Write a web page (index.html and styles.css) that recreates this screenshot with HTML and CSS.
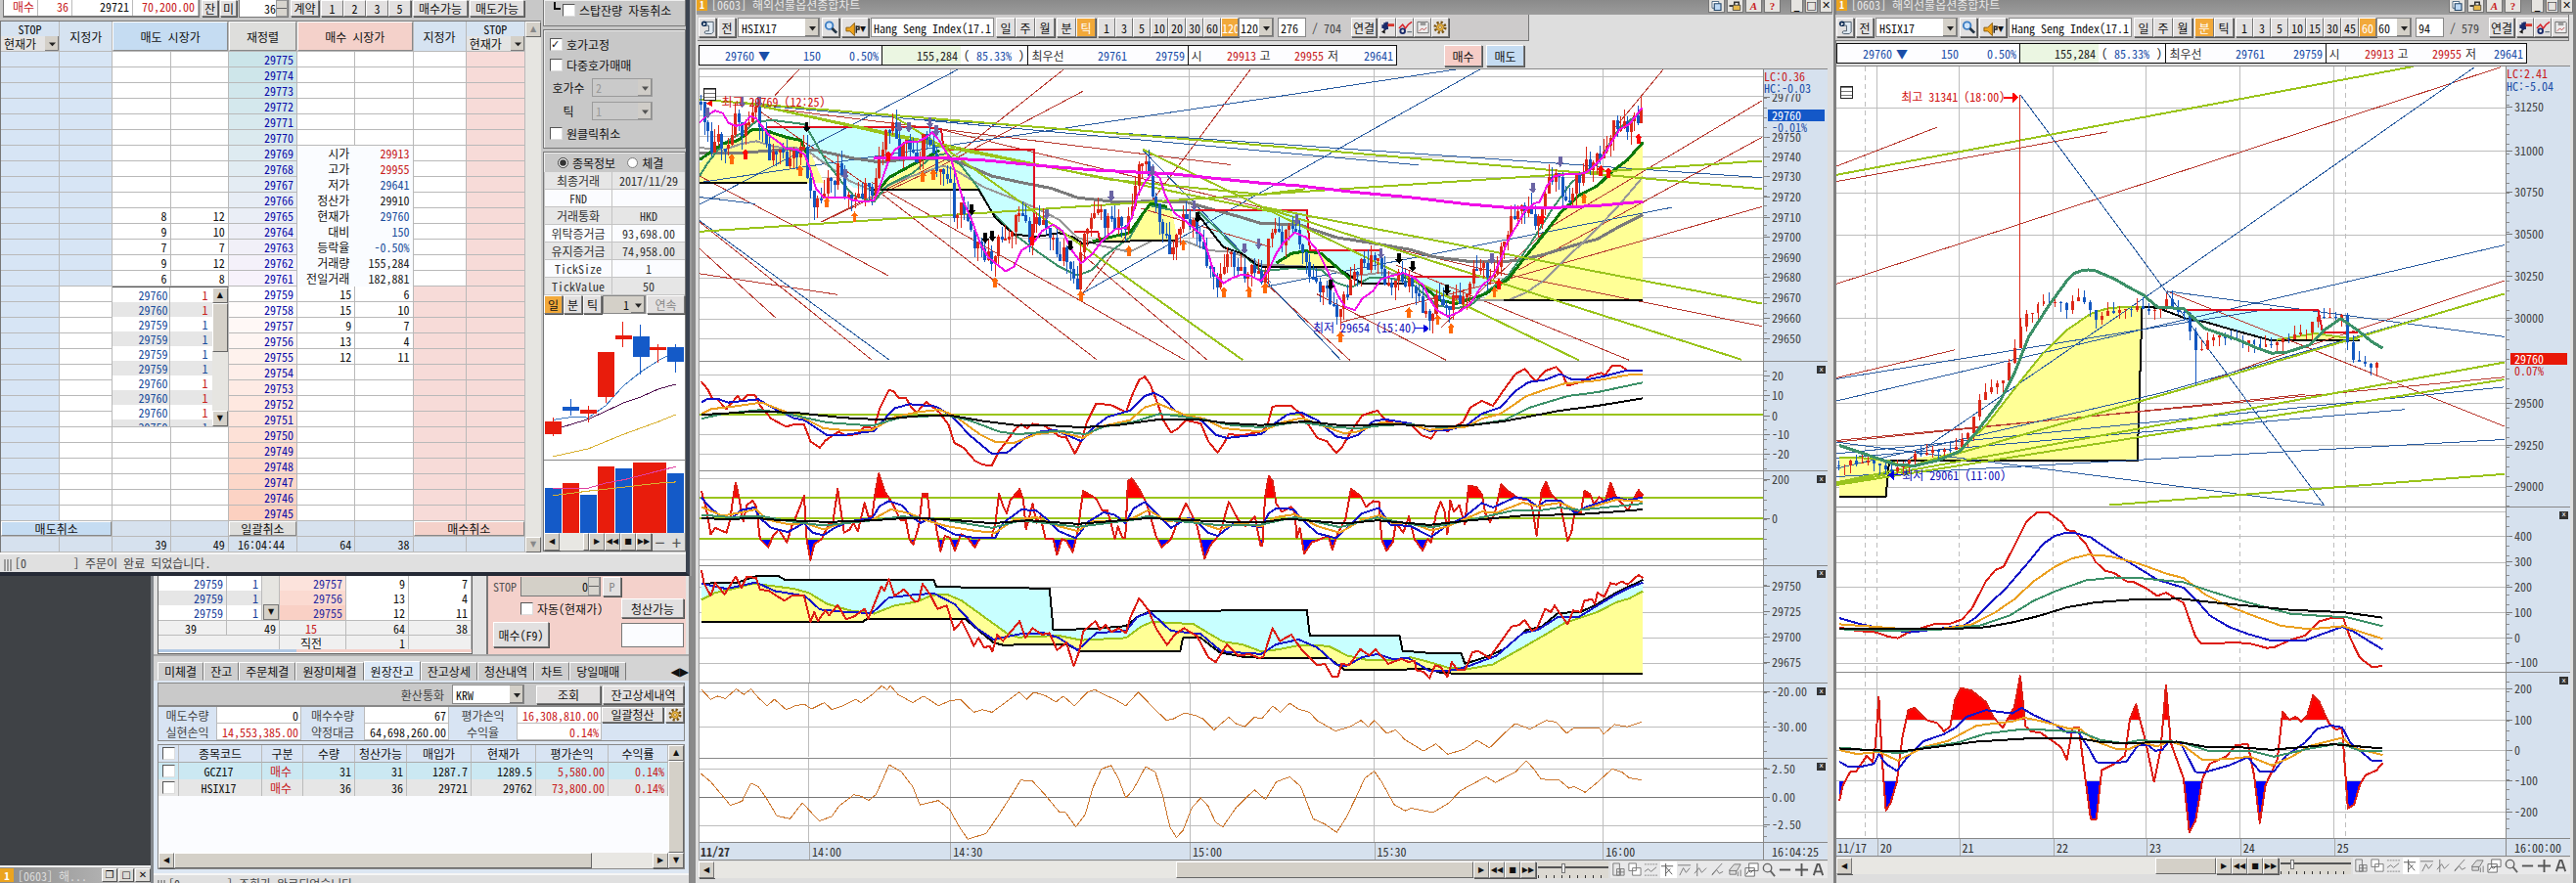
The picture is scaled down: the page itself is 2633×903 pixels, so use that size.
FILE: index.html
```html
<!DOCTYPE html>
<html lang="ko">

<head>
    <meta charset="UTF-8">
    <meta name="viewport" content="width=device-width, initial-scale=1.0">
    <title>해외선물옵션종합차트</title>
    <link rel="stylesheet" href="styles.css">
</head>

<body>
    <!-- Shared icons -->
    <svg class="sprite" aria-hidden="true">
        <symbol id="i-doc" viewBox="0 0 16 16"><path d="M5 2h9v11l-2 2H6c-2 0-2-3 0-3h3V6H5z" fill="#dfe9f2" stroke="#456"/><circle cx="4" cy="4" r="3" fill="#0d2c55"/><path d="M3 3l3 1-3 2z" fill="#fff"/></symbol>
        <symbol id="i-find" viewBox="0 0 16 16"><circle cx="6" cy="6" r="4" fill="#cfe4fa" stroke="#3f7fc4" stroke-width="2"/><path d="M9 9l5 5" stroke="#234" stroke-width="3"/></symbol>
        <symbol id="i-speaker" viewBox="0 0 16 16"><path d="M1 6h4l5-5v14l-5-5H1z" fill="#f0a41c" stroke="#8a5a08"/><path d="M12 4v8M12 5h3v3h-3" fill="none" stroke="#222" stroke-width="1.5"/></symbol>
        <symbol id="i-link" viewBox="0 0 16 16"><path d="M5 3v8M3 5v4M7 2v8" stroke="#1a2a6a" stroke-width="3"/><path d="M8 4h7v3H8z" fill="#d8342a"/><path d="M1 13l4-3v5z" fill="#111"/></symbol>
        <symbol id="i-trend" viewBox="0 0 16 16"><path d="M1 9l4-4 3 4 3-4 4-3" fill="none" stroke="#d8222a" stroke-width="1.6"/><circle cx="5" cy="12" r="2.5" fill="none" stroke="#1a2a6a" stroke-width="2"/><path d="M10 13h5" stroke="#456"/></symbol>
        <symbol id="i-save" viewBox="0 0 16 16"><path d="M2 2h11l1 1v11H2z" fill="#eee" stroke="#666"/><path d="M5 2h6v4H5z" fill="#999"/><path d="M4 12l3-3 2 2 3-3" fill="none" stroke="#b44"/></symbol>
        <symbol id="i-gear" viewBox="0 0 16 16"><circle cx="8" cy="8" r="6" fill="none" stroke="#7a5410" stroke-width="3" stroke-dasharray="2.5 2.2"/><circle cx="8" cy="8" r="4" fill="#f3c14a" stroke="#a06c10"/><circle cx="8" cy="8" r="1.6" fill="#fff" stroke="#a06c10"/></symbol>
        <symbol id="i-copy" viewBox="0 0 16 16"><path d="M2 2h9v9H2z" fill="#fff" stroke="#246"/><path d="M5 5h9v9H5z" fill="#bcd8f4" stroke="#246" stroke-width="1.5"/></symbol>
        <symbol id="i-lock" viewBox="0 0 16 16"><path d="M5 7h10v7H5z" fill="#e6b84a" stroke="#333"/><path d="M7 7V3h6v4" fill="none" stroke="#333" stroke-width="2"/><path d="M0 8h5" stroke="#111" stroke-width="2"/></symbol>
        <symbol id="t-1" viewBox="0 0 16 16"><path d="M3 1h7v13H3zM7 7h8v7H7zM7 10.5h8M11 7v7" fill="none" stroke="#777"/></symbol>
        <symbol id="t-2" viewBox="0 0 16 16"><path d="M2 1h8v8H2zM6 6h9v8H6z" fill="#fff" stroke="#777"/></symbol>
        <symbol id="t-3" viewBox="0 0 16 16"><path d="M1 2h14M1 14h14" stroke="#888" stroke-dasharray="2 1"/><path d="M1 10l4-3 3 3 6-5" fill="none" stroke="#777"/></symbol>
        <symbol id="t-4" viewBox="0 0 16 16"><path d="M6 1v14M1 4h13M6 5l7 8M6 12l5-5" fill="none" stroke="#555"/></symbol>
        <symbol id="t-5" viewBox="0 0 16 16"><path d="M1 3h14M3 14l4-8 3 5 4-5" fill="none" stroke="#777"/></symbol>
        <symbol id="t-6" viewBox="0 0 16 16"><path d="M4 1v14M1 12l5-6 3 5 5-5" fill="none" stroke="#777"/></symbol>
        <symbol id="t-7" viewBox="0 0 16 16"><path d="M2 13L13 1M2 14l5-6 3 4 4-2" fill="none" stroke="#777"/></symbol>
        <symbol id="t-8" viewBox="0 0 16 16"><path d="M2 8l5-6h7l-4 7H2zM2 8v5h7V9M11 10v5M14 8v7" fill="#ddd" stroke="#777"/></symbol>
        <symbol id="t-9" viewBox="0 0 16 16"><path d="M5 1h10v8H5zM1 6h10v9H1z" fill="#fff" stroke="#666"/><path d="M2 13l3-4 2 2 3-3" fill="none" stroke="#444"/></symbol>
        <symbol id="t-10" viewBox="0 0 16 16"><circle cx="7" cy="6" r="4.5" fill="none" stroke="#666" stroke-width="1.5"/><path d="M10 9l5 6" stroke="#666" stroke-width="2"/></symbol>
        <symbol id="t-11" viewBox="0 0 16 16"><path d="M2 8h12" stroke="#555" stroke-width="2"/></symbol>
        <symbol id="t-12" viewBox="0 0 16 16"><path d="M1 8h14M8 1v14" stroke="#555" stroke-width="2"/></symbol>
        <symbol id="t-13" viewBox="0 0 16 16"><path d="M3 14L7 2h2l4 12M5 10h6" fill="none" stroke="#555" stroke-width="2"/></symbol>
    </svg>

    <div class="desktop">
        <div class="left">
            <!-- Order window -->
            <section class="order">
                <div class="order-body">
                    <div class="ladder-side">
                        <div class="top-strip">
                            <div class="position">
                                <span class="red w35">매수</span><span class="red w35">36</span><span class="w62">29721</span><span class="red w67">70,200.00</span>
                            </div>
                            <button class="btn w17">잔</button><button class="btn w17">미</button>
                            <label class="spin"><input type="text" value="36" aria-label="주문수량"><i></i></label>
                            <button class="btn w30">계약</button>
                            <div class="nums"><button class="btn">1</button><button class="btn">2</button><button class="btn">3</button><button class="btn">5</button></div>
                            <button class="btn w56">매수가능</button><button class="btn w56">매도가능</button>
                        </div>
                        <div class="ladder-wrap">
                            <table class="ladder">
                                <colgroup>
                                    <col class="c60"><col class="c55"><col class="c59"><col class="c59"><col class="c70"><col class="c59"><col class="c59"><col class="c55"><col class="c60">
                                </colgroup>
                                <thead>
                                    <tr>
                                        <th class="stop">STOP<select aria-label="매도 STOP 기준"><option>현재가</option></select></th>
                                        <th>지정가</th>
                                        <th colspan="2" class="sell"><button>매도 시장가</button></th>
                                        <th class="align"><button>재정렬</button></th>
                                        <th colspan="2" class="buy"><button>매수 시장가</button></th>
                                        <th>지정가</th>
                                        <th class="stop">STOP<select aria-label="매수 STOP 기준"><option>현재가</option></select></th>
                                    </tr>
                                </thead>
                                <tbody id="ladder"></tbody>
                                <tfoot>
                                    <tr>
                                        <td colspan="2" class="sell"><button>매도취소</button></td><td></td><td></td>
                                        <td class="align"><button>일괄취소</button></td><td></td><td></td>
                                        <td colspan="2" class="buy"><button>매수취소</button></td>
                                    </tr>
                                    <tr><td></td><td></td><td>39</td><td>49</td><td class="mid">16:04:44</td><td>64</td><td>38</td><td></td><td></td></tr>
                                </tfoot>
                            </table>
                            <div class="vbar off"><button aria-label="위로">▲</button><span></span><button aria-label="아래로">▼</button></div>
                        </div>
                    </div>
                    <div class="options">
                        <div class="group first"><b class="elbow"></b><label class="check"><input type="checkbox"> 스탑잔량 자동취소</label></div>
                        <div class="group opts">
                            <label class="check"><input type="checkbox" checked> 호가고정</label>
                            <label class="check"><input type="checkbox"> 다중호가매매</label>
                            <label class="pick"><span>호가수</span><select disabled><option>2</option></select></label>
                            <label class="pick"><span>틱</span><select disabled><option>1</option></select></label>
                            <label class="check"><input type="checkbox"> 원클릭취소</label>
                        </div>
                        <div class="group info">
                            <div class="radios">
                                <label><input type="radio" name="info" checked> 종목정보</label>
                                <label><input type="radio" name="info"> 체결</label>
                            </div>
                            <table class="facts">
                                <tr><th>최종거래</th><td>2017/11/29</td></tr>
                                <tr><th>FND</th><td></td></tr>
                                <tr><th>거래통화</th><td>HKD</td></tr>
                                <tr><th>위탁증거금</th><td>93,698.00</td></tr>
                                <tr><th>유지증거금</th><td>74,958.00</td></tr>
                                <tr><th>TickSize</th><td>1</td></tr>
                                <tr><th>TickValue</th><td>50</td></tr>
                            </table>
                            <div class="mini-tabs">
                                <button class="btn on">일</button><button class="btn">분</button><button class="btn">틱</button>
                                <select aria-label="주기"><option>1</option></select>
                                <button class="btn grow" disabled>연속</button>
                            </div>
                            <svg class="plot mini" id="mini" viewBox="48 840 434 585" preserveAspectRatio="none"></svg>
                            <div class="nav">
                                <button class="btn">◀</button><span class="track"></span><span class="knob"></span>
                                <button class="btn">▶</button><button class="btn">◀◀</button><button class="btn">■</button><button class="btn">▶▶</button>
                                <button class="flat">−</button><button class="flat">+</button>
                            </div>
                        </div>
                    </div>
                </div>
                <div class="status"><i></i>[0 &nbsp; &nbsp; &nbsp; &nbsp;] 주문이 완료 되었습니다.</div>
            </section>

            <div class="lower">
                <div class="backdrop">
                    <div class="minimized">
                        <b class="badge">1</b><span>[0603] 해...</span>
                        <button aria-label="복원">❐</button><button aria-label="최대화">□</button><button aria-label="닫기">✕</button>
                    </div>
                </div>
                <!-- Account window -->
                <section class="account">
                    <div class="acc-top">
                        <div class="mini-ladder">
                            <table>
                                <tr><td class="tick">29759</td><td class="tick">1</td><td rowspan="3" class="bar"><button aria-label="아래로">▼</button></td><td class="p1">29757</td><td>9</td><td>7</td></tr>
                                <tr class="alt"><td class="tick">29759</td><td class="tick">1</td><td class="p2">29756</td><td>13</td><td>4</td></tr>
                                <tr><td class="tick">29759</td><td class="tick">1</td><td class="p3">29755</td><td>12</td><td>11</td></tr>
                                <tr class="sum"><td class="mid">39</td><td colspan="2">49</td><td class="red mid">15</td><td>64</td><td>38</td></tr>
                                <tr class="sum"><td colspan="3"></td><td class="mid">직전</td><td>1</td><td></td></tr>
                            </table>
                            <div class="ratio"><i></i><i></i></div>
                        </div>
                        <div class="quick">
                            <span class="q-label">STOP</span>
                            <label class="spin wide"><input type="text" value="0" disabled aria-label="STOP"><i></i></label>
                            <button class="btn p" disabled>P</button>
                            <label class="check q-auto"><input type="checkbox"> 자동(현재가)</label>
                            <button class="btn q-can">청산가능</button>
                            <button class="btn q-buy">매수(F9)</button>
                            <input class="q-box" type="text" aria-label="청산가능수량">
                        </div>
                    </div>
                    <nav class="tabs">
                        <button>미체결</button><button>잔고</button><button>주문체결</button><button>원장미체결</button><button class="on">원장잔고</button><button>잔고상세</button><button>청산내역</button><button>차트</button><button>당일매매</button>
                        <span>◀▶</span>
                    </nav>
                    <div class="acc-panel">
                        <div class="acc-bar">
                            <label>환산통화 <select><option>KRW</option></select></label>
                            <button class="btn w66">조회</button><button class="btn w83">잔고상세내역</button>
                        </div>
                        <div class="summary">
                            <span>매도수량</span><b>0</b><span>매수수량</span><b>67</b><span>평가손익</span><b class="red">16,308,810.00</b>
                            <div><button class="btn">일괄청산</button><button class="btn gear" aria-label="설정"><svg><use href="#i-gear"/></svg></button></div>
                            <span>실현손익</span><b class="red">14,553,385.00</b><span>약정대금</span><b>64,698,260.00</b><span>수익율</span><b class="red">0.14%</b><div></div>
                        </div>
                        <div class="holdings">
                            <div class="hold-main">
                                <table>
                                    <colgroup><col class="h1"><col class="h2"><col class="h3"><col class="h4"><col class="h4"><col class="h5"><col class="h5"><col class="h6"><col></colgroup>
                                    <thead><tr><th><input type="checkbox" aria-label="전체선택"></th><th>종목코드</th><th>구분</th><th>수량</th><th>청산가능</th><th>매입가</th><th>현재가</th><th>평가손익</th><th>수익률</th></tr></thead>
                                    <tbody>
                                        <tr class="sel"><td><input type="checkbox" aria-label="GCZ17"></td><td class="mid">GCZ17</td><td class="mid red">매수</td><td>31</td><td>31</td><td>1287.7</td><td>1289.5</td><td class="red">5,580.00</td><td class="red">0.14%</td></tr>
                                        <tr><td><input type="checkbox" aria-label="HSIX17"></td><td class="mid">HSIX17</td><td class="mid red">매수</td><td>36</td><td>36</td><td>29721</td><td>29762</td><td class="red">73,800.00</td><td class="red">0.14%</td></tr>
                                    </tbody>
                                </table>
                                <div class="hbar"><button class="btn" aria-label="왼쪽">◀</button><span class="thumb"></span><span class="track"></span><button class="btn" aria-label="오른쪽">▶</button></div>
                            </div>
                            <div class="vbar full"><button aria-label="위로">▲</button><span class="thumb"></span><button aria-label="아래로">▼</button></div>
                        </div>
                    </div>
                    <div class="status"><i></i>[0 &nbsp; &nbsp; &nbsp; &nbsp;] 조회가 완료되었습니다.</div>
                </section>
            </div>
        </div>

        <!-- Tick chart -->
        <section class="chart">
            <header class="title">
                <b class="badge">1</b><span>[0603] 해외선물옵션종합차트</span>
                <div class="tools"><button aria-label="복사"><svg><use href="#i-copy"/></svg></button><button aria-label="고정"><svg><use href="#i-lock"/></svg></button><button class="red"><i>A</i></button><button class="red">?</button></div>
                <div class="win"><button aria-label="최소화">_</button><button aria-label="최대화">□</button><button aria-label="닫기">✕</button></div>
            </header>
            <div class="toolbar">
                <button class="btn ic" aria-label="문서"><svg><use href="#i-doc"/></svg></button><button class="btn ic">전</button>
                <select class="code" aria-label="종목코드"><option>HSIX17</option></select>
                <button class="btn ic" aria-label="검색"><svg><use href="#i-find"/></svg></button>
                <button class="btn ic2" aria-label="소리"><svg><use href="#i-speaker"/></svg>▾</button>
                <input class="name" type="text" value="Hang Seng Index(17.1" aria-label="종목명">
                <div class="seg big"><button class="btn">일</button><button class="btn">주</button><button class="btn">월</button></div>
                <div class="seg big"><button class="btn">분</button><button class="btn on">틱</button></div>
                <div class="seg"><button class="btn">1</button><button class="btn">3</button><button class="btn">5</button><button class="btn">10</button><button class="btn">20</button><button class="btn">30</button><button class="btn">60</button><button class="btn on">120</button></div>
                <select class="cycle" aria-label="주기"><option>120</option></select>
                <input class="count" type="text" value="276" aria-label="봉 개수"><span class="total">/ 704</span>
                <button class="btn w26">연결</button>
                <div class="icons"><button class="btn"><svg><use href="#i-link"/></svg></button><button class="btn"><svg><use href="#i-trend"/></svg></button><button class="btn"><svg><use href="#i-save"/></svg></button><button class="btn"><svg><use href="#i-gear"/></svg></button></div>
            </div>
            <div class="quote-row">
                <div class="quote">
                    <span>29760</span><span class="mid">▼</span><span>150</span><span>0.50%</span><span class="vol">155,284</span><span class="pct">(<em>85.33%</em>)</span><span class="k">최우선</span><span>29761</span><span>29759</span><span class="k">시</span><span class="red">29913</span><span class="k">고</span><span class="red">29955</span><span class="k">저</span><span>29641</span>
                </div>
                <button class="btn trade buy">매수</button><button class="btn trade sell">매도</button>
            </div>
            <div class="panes" id="tick-panes"></div>
            <div class="times" id="tick-times"></div>
            <div class="scroller">
                <button class="btn" aria-label="왼쪽">◀</button><span class="track t1"></span><span class="knob k1"></span>
                <button class="btn">▶</button><button class="btn">◀◀</button><button class="btn">■</button><button class="btn">▶▶</button>
                <input type="range" value="36" aria-label="확대">
                <div class="draw"></div>
            </div>
        </section>

        <!-- Minute chart -->
        <section class="chart minute">
            <header class="title">
                <b class="badge">1</b><span>[0603] 해외선물옵션종합차트</span>
                <div class="tools"><button aria-label="복사"><svg><use href="#i-copy"/></svg></button><button aria-label="고정"><svg><use href="#i-lock"/></svg></button><button class="red"><i>A</i></button><button class="red">?</button></div>
                <div class="win"><button aria-label="최소화">_</button><button aria-label="최대화">□</button><button aria-label="닫기">✕</button></div>
            </header>
            <div class="toolbar">
                <button class="btn ic" aria-label="문서"><svg><use href="#i-doc"/></svg></button><button class="btn ic">전</button>
                <select class="code" aria-label="종목코드"><option>HSIX17</option></select>
                <button class="btn ic" aria-label="검색"><svg><use href="#i-find"/></svg></button>
                <button class="btn ic2" aria-label="소리"><svg><use href="#i-speaker"/></svg>▾</button>
                <input class="name" type="text" value="Hang Seng Index(17.1" aria-label="종목명">
                <div class="seg big"><button class="btn">일</button><button class="btn">주</button><button class="btn">월</button></div>
                <div class="seg big"><button class="btn on">분</button><button class="btn">틱</button></div>
                <div class="seg"><button class="btn">1</button><button class="btn">3</button><button class="btn">5</button><button class="btn">10</button><button class="btn">15</button><button class="btn">30</button><button class="btn">45</button><button class="btn on">60</button></div>
                <select class="cycle" aria-label="주기"><option>60</option></select>
                <input class="count" type="text" value="94" aria-label="봉 개수"><span class="total">/ 579</span>
                <button class="btn w26">연결</button>
                <div class="icons"><button class="btn"><svg><use href="#i-link"/></svg></button><button class="btn"><svg><use href="#i-trend"/></svg></button><button class="btn"><svg><use href="#i-save"/></svg></button><button class="btn"><svg><use href="#i-gear"/></svg></button></div>
            </div>
            <div class="quote-row">
                <div class="quote">
                    <span>29760</span><span class="mid">▼</span><span>150</span><span>0.50%</span><span class="vol">155,284</span><span class="pct">(<em>85.33%</em>)</span><span class="k">최우선</span><span>29761</span><span>29759</span><span class="k">시</span><span class="red">29913</span><span class="k">고</span><span class="red">29955</span><span class="k">저</span><span>29641</span>
                </div>
            </div>
            <div class="panes" id="minute-panes"></div>
            <div class="times" id="minute-times"></div>
            <div class="scroller">
                <button class="btn" aria-label="왼쪽">◀</button><span class="track t2"></span><span class="knob k2"></span>
                <button class="btn">▶</button><button class="btn">◀◀</button><button class="btn">■</button><button class="btn">▶▶</button>
                <input type="range" value="15" aria-label="확대">
                <div class="draw"></div>
            </div>
        </section>
    </div>

    <script src="script.js"></script>
</body>

</html>
```
FILE: styles.css
```css
* {
    box-sizing: border-box;
}

body {
    margin: 0;
    background: #3f4246;
    color: #111;
    font-family: "Noto Sans Mono CJK KR", "Noto Sans CJK KR", sans-serif;
    font-size: 12px;
    line-height: 15px;
}

button,
input,
select {
    font: inherit;
    color: inherit;
    margin: 0;
    padding: 0;
    border-radius: 0;
}

select {
    appearance: none;
    padding-left: 3px;
    border: 1px solid #888;
    background: #fff right / 14px 100% no-repeat;
    background-image: url("data:image/svg+xml,%3Csvg xmlns='http://www.w3.org/2000/svg' width='14' height='16'%3E%3Cpath d='M0 0h14v16H0z' fill='%23d4d0c8'/%3E%3Cpath d='M13.5 0v15.5H0' fill='none' stroke='%23777'/%3E%3Cpath d='M4 7h7l-3.5 4z' fill='%23222'/%3E%3C/svg%3E");
}

table {
    border-collapse: separate;
    border-spacing: 0;
}

th,
td {
    padding: 0;
    font-weight: normal;
    white-space: nowrap;
}

.sprite {
    display: none;
}

.red {
    color: #c8201c !important;
}

.mid {
    text-align: center !important;
}

.btn {
    border: 1px solid;
    border-color: #fff #777 #777 #fff;
    box-shadow: 1px 1px 0 #555;
    background: #e2e0e0;
    white-space: nowrap;
    overflow: hidden;
    text-align: center;
}

.btn.on {
    background: #f2a93a;
    color: #fff;
}

.btn:disabled {
    color: #888;
}

.w17 { width: 17px; }
.w26 { width: 26px; }
.w30 { width: 29px; }
.w35 { width: 35px; }
.w56 { width: 56px; }
.w62 { width: 62px; }
.w66 { width: 66px; }
.w67 { width: 67px; }
.w83 { width: 83px; }

.desktop {
    display: grid;
    grid-template-columns: 707px 1170fr 756fr;
    height: 100vh;
    overflow: hidden;
}

.left {
    display: flex;
    flex-direction: column;
    min-height: 0;
    background: #9a9a9a;
}

/* Order window */
.order {
    flex: none;
    border-right: 4px solid #3b4350;
    border-bottom: 4px solid #252a36;
    background: #c8c8c8;
    margin-right: 2px;
}

.order-body {
    display: flex;
}

.ladder-side {
    width: 553px;
}

.top-strip {
    display: flex;
    gap: 2px;
    height: 21px;
    padding: 0 0 3px 3px;
}

.top-strip > * {
    flex: none;
    line-height: 13px;
}

.top-strip .btn {
    line-height: 12px;
    height: 17px;
}

.position {
    display: flex;
    width: 201px;
    background: #fff;
    border: solid #777;
    border-width: 0 1px 2px;
}

.position span {
    padding-right: 3px;
    border-right: 1px solid #bbb;
    text-align: right;
}

.nums {
    display: flex;
    width: 92px;
}

.nums .btn {
    flex: 1;
}

.spin {
    display: flex;
    width: 51px;
    background: #fff;
    border: 1px solid #777;
    border-top: 0;
}

.spin input {
    flex: 1;
    min-width: 0;
    border: 0;
    background: none;
    text-align: right;
}

.spin i {
    width: 12px;
    background: linear-gradient(#d8d5ce 46%, #666 46% 54%, #d8d5ce 54%);
    border: 1px solid #999;
}

.ladder-wrap {
    display: flex;
    border-top: 1px solid #777;
    border-left: 1px solid #777;
}

.ladder {
    table-layout: fixed;
    width: 536px;
    background: #fff;
}

.c60 { width: 60px; }
.c55 { width: 54px; }
.c59 { width: 59px; }
.c70 { width: 70px; }

.ladder th,
.ladder td {
    border: solid #b9b9b9;
    border-width: 0 1px 1px 0;
}

.ladder th {
    height: 31px;
    background: #d6e3f1;
}

.ladder td {
    height: 16px;
    line-height: 14px;
    padding-right: 3px;
    text-align: right;
}

.ladder th button,
.ladder tfoot button {
    display: block;
    width: 100%;
    height: 30px;
    border: 1px solid;
    border-color: #fff #888 #888 #fff;
    background: none;
}

.ladder tfoot button {
    height: 15px;
    line-height: 12px;
}

.ladder tfoot td {
    background: #d6e1ee;
    line-height: 15px;
}

.ladder tfoot td.sell,
.ladder tfoot td.align,
.ladder tfoot td.buy {
    padding: 0;
}

.ladder .sell { background: #c5dcf2; }
.ladder .buy { background: #f4d1ca; }
.ladder .align { background: #dededc; }

.stop select {
    display: block;
    width: 100%;
    height: 15px;
    line-height: 12px;
    border: 0;
    background-color: #e4e4e4;
}

.ladder td.blue { background: #d7e5f5; }
.ladder td.pink { background: #f7dbd8; }
.ladder td.price { color: #0a0aa8; }

.ladder td.key,
.ladder td.val {
    border-width: 0;
    background: #fafcff;
}

.ladder td.key { padding-right: 6px; }

.ladder td.val {
    border-right-width: 1px;
    color: #1a4e9c;
}

.ladder td.val.dark { color: #222; }

.ladder td.ticks {
    padding: 0;
    border-top: 1px solid #555;
    vertical-align: top;
}

.tick-list {
    display: flex;
    height: 142px;
    overflow: hidden;
}

.tick-list ol {
    flex: 1;
    margin: 0;
    padding: 0;
    list-style: none;
}

.tick-list li {
    display: flex;
    height: 15px;
    line-height: 15px;
    color: #1a4e9c;
}

.tick-list li:nth-child(even) { background: #e6e6e6; }

.tick-list li span {
    width: 41px;
    padding-right: 3px;
}

.tick-list li span:first-child {
    width: 59px;
    padding-right: 2px;
    border-right: 1px solid #b9b9b9;
}

.vbar {
    display: flex;
    flex-direction: column;
    width: 16px;
    background: #e6e5e1;
}

.vbar button {
    height: 16px;
    border: 1px solid;
    border-color: #fff #666 #666 #fff;
    background: #d4d0c8;
    font-size: 8px;
    line-height: 12px;
    font-family: "DejaVu Sans", sans-serif;
}

.vbar span { flex: 1; }
.vbar.off button { color: #888; }

.vbar .thumb {
    border: 1px solid;
    border-color: #fff #666 #666 #fff;
    background: #d4d0c8;
}

.tick-list .thumb {
    flex: none;
    height: 50px;
}

.status {
    flex: none;
    height: 20px;
    border-top: 2px solid #f6f6f6;
    background: #e0e0e0;
    color: #444;
    line-height: 18px;
    padding-left: 4px;
}

.status i {
    display: inline-block;
    width: 8px;
    height: 12px;
    margin-right: 3px;
    vertical-align: middle;
    background: repeating-linear-gradient(90deg, #999 0 2px, #eee 2px 3px);
}

/* Options column */
.options {
    width: 148px;
    padding-left: 2px;
}

.group {
    border: 1px solid #777;
    box-shadow: inset 1px 1px 0 #eee;
    margin-bottom: 3px;
}

.check,
.radios label {
    display: flex;
    align-items: center;
    gap: 4px;
    white-space: nowrap;
}

input[type="checkbox"] {
    appearance: none;
    width: 13px;
    height: 13px;
    border: 1px solid;
    border-color: #555 #ddd #ddd #555;
    background: #fff;
}

input[type="checkbox"]:checked::before {
    content: "✓";
    display: block;
    font: bold 11px/11px "DejaVu Sans", sans-serif;
}

.group.first {
    display: flex;
    height: 27px;
    padding: 0 0 6px 10px;
    border-top: 0;
}

.elbow {
    width: 7px;
    height: 8px;
    margin: 2px 2px 0 0;
    border: solid #111;
    border-width: 0 0 2px 2px;
}

.opts {
    display: flex;
    flex-direction: column;
    justify-content: space-between;
    height: 122px;
    padding: 7px 6px;
}

.pick {
    display: flex;
    gap: 5px;
    align-items: center;
}

.pick span {
    width: 38px;
    text-align: center;
}

.pick select {
    width: 62px;
    height: 19px;
    background-color: #ccc;
    color: #888;
}

.radios {
    display: flex;
    gap: 12px;
    height: 20px;
    padding-left: 14px;
}

.radios input {
    width: 11px;
    height: 11px;
    accent-color: #333;
}

.group.info {
    margin-bottom: 0;
}

.facts {
    width: 100%;
    table-layout: fixed;
    color: #333;
    background: #fbfcff;
}

.facts th,
.facts td {
    height: 18px;
    text-align: center;
    border: solid #c4c4c4;
    border-width: 0 0 1px 1px;
}

.facts th { width: 69px; }
.facts tr:nth-child(odd) { background: #e6e6e6; }

.mini-tabs {
    display: flex;
    gap: 1px;
    height: 19px;
}

.mini-tabs .btn { width: 19px; }
.mini-tabs .btn.on { color: #111; }

.mini-tabs select {
    width: 44px;
    background-color: #d4d0c8;
    padding-left: 20px;
}

.mini-tabs .grow {
    flex: 1;
}

.mini {
    display: block;
    width: 100%;
    height: 224px;
    background: #fff;
}

.nav,
.hbar,
.scroller {
    display: flex;
}

.nav {
    height: 18px;
    background: #ddd;
}

.nav .btn,
.hbar .btn,
.scroller .btn {
    flex: none;
    width: 16px;
    background: #d4d0c8;
    font: 8px/12px "DejaVu Sans", sans-serif;
}

.nav .track { flex: 1; }

.track {
    background: #e8e7e3;
}

.knob,
.thumb {
    border: 1px solid;
    border-color: #fff #666 #666 #fff;
    background: #d4d0c8;
}

.nav .knob { width: 6px; }

.flat {
    width: 17px;
    border: 0;
    background: none;
    font-size: 18px;
    color: #555;
}

/* Account window */
.lower {
    flex: 1;
    display: flex;
    min-height: 0;
}

.backdrop {
    width: 157px;
    display: flex;
    align-items: flex-end;
    background: #3f4246;
    border-right: 3px solid #83878c;
}

.minimized {
    display: flex;
    align-items: center;
    gap: 1px;
    flex: 1;
    height: 18px;
    border-top: 2px solid #eee;
    background: linear-gradient(90deg, #8b8b8b, #c2c2c2);
    color: #ddd;
}

.minimized span { flex: 1; padding-left: 3px; }

.minimized button {
    width: 16px;
    height: 14px;
    border: 1px solid;
    border-color: #fff #555 #555 #fff;
    background: #dcdad6;
    color: #111;
    font: bold 10px/10px "DejaVu Sans", sans-serif;
}

.badge {
    width: 14px;
    height: 14px;
    background: #eba420;
    color: #fff;
    text-align: center;
    line-height: 14px;
    font-size: 11px;
}

.account {
    flex: 1;
    display: flex;
    flex-direction: column;
    min-width: 0;
    background: #dde7f3;
    border-right: 3px solid #888;
}

.acc-top {
    display: flex;
    gap: 14px;
    height: 83px;
    padding: 0 3px 0 4px;
    border-bottom: 2px solid #aaa;
    background: #e2e2e2;
}

.mini-ladder {
    width: 323px;
    height: 80px;
    border: solid #666;
    border-width: 0 1px 1px;
    background: #fff;
}

.mini-ladder table {
    width: 100%;
    table-layout: fixed;
}

.mini-ladder td {
    height: 15px;
    padding-right: 3px;
    border-right: 1px solid #bbb;
    text-align: right;
}

.mini-ladder td:nth-child(1) { width: 70px; }
.mini-ladder td:nth-child(2) { width: 36px; }
.mini-ladder .bar { width: 18px; padding: 0; vertical-align: bottom; background: #e6e5e1; }
.mini-ladder .bar button { width: 16px; height: 16px; border: 1px solid #777; background: #d4d0c8; font: 8px/12px "DejaVu Sans", sans-serif; }
.mini-ladder .tick { color: #1a3e9c; }
.mini-ladder .alt .tick { background: #e6e6e6; }
.mini-ladder .p1, .mini-ladder .p2, .mini-ladder .p3 { width: 68px; color: #2a2aa0; }
.mini-ladder .p1 { background: #fce3dc; }
.mini-ladder .p2 { background: #fbdad1; }
.mini-ladder .p3 { background: #f9d0c5; }
.mini-ladder .sum td { background: #f0f0f0; border-top: 1px solid #bbb; line-height: 13px; }

.ratio {
    display: flex;
    height: 3px;
}

.ratio i:first-child { flex: 44; background: #b0c8e4; }
.ratio i { flex: 56; background: #f4cfc8; }

.quick {
    flex: 1;
    display: grid;
    grid-template-columns: 28px 28px 56px 19px 1fr 64px;
    grid-template-rows: 21px 24px 30px;
    align-items: center;
    padding: 0 2px 0 5px;
    border-left: 2px solid #777;
    background: #f4d1cb;
}

.quick .spin.wide {
    grid-column: 2 / 4;
    width: 82px;
    height: 20px;
    background: #d4d0c8;
}

.quick .q-label { color: #555; }
.q-auto { grid-column: 2 / 6; grid-row: 2; }
.q-can { grid-column: 6; grid-row: 2; height: 20px; }
.q-buy { grid-column: 1 / 4; grid-row: 3; width: 57px; height: 26px; }
.q-box { grid-column: 6; grid-row: 3; width: 64px; height: 25px; border: 1px solid #777; background: #fbfcff; }
.btn.p { height: 20px; }

.tabs {
    display: flex;
    align-items: flex-end;
    height: 25px;
    padding: 5px 0 0 4px;
    background: #d4d4d4;
}

.tabs button {
    height: 19px;
    padding: 0 6px;
    border: 1px solid;
    border-color: #fff #777 #ccc #fff;
    background: #cecece;
    white-space: nowrap;
}

.tabs button.on {
    height: 20px;
    background: #dde9f7;
}

.tabs span {
    margin-left: auto;
    font: 12px/18px "DejaVu Sans", sans-serif;
    white-space: nowrap;
}

.acc-panel {
    flex: none;
    height: 197px;
    display: flex;
    flex-direction: column;
    padding: 2px 4px 4px;
}

.acc-bar {
    display: flex;
    justify-content: flex-end;
    align-items: center;
    gap: 2px;
    height: 24px;
    border: 1px solid #888;
    background: #c9c9c9;
    color: #444;
}

.acc-bar select {
    width: 74px;
    height: 20px;
    margin: 0 10px 0 2px;
    color: #111;
}

.acc-bar .btn {
    height: 19px;
    line-height: 17px;
    color: #111;
}

.summary {
    display: grid;
    grid-template-columns: 59px 87px 64px 87px 69px 87px 1fr;
    grid-template-rows: 17px 17px;
    margin-bottom: 3px;
    border: 1px solid #888;
    background: #d8e4f3;
    line-height: 17px;
}

.summary span {
    text-align: center;
    color: #444;
}

.summary b {
    padding-right: 2px;
    border: solid #bbb;
    border-width: 0 1px 1px;
    background: #fff;
    font-weight: normal;
    text-align: right;
}

.summary div {
    display: flex;
    gap: 2px;
}

.summary .btn {
    width: 63px;
    height: 16px;
    line-height: 14px;
}

.summary .gear {
    width: 19px;
}

.gear svg {
    width: 14px;
    height: 14px;
    display: block;
    margin: auto;
}

.holdings {
    flex: 1;
    display: flex;
    border: 1px solid #888;
    background: #fbfcff;
}

.hold-main {
    flex: 1;
    display: flex;
    flex-direction: column;
    justify-content: space-between;
}

.hold-main table {
    width: 100%;
    table-layout: fixed;
}

.h1 { width: 21px; }
.h2 { width: 85px; }
.h3 { width: 42px; }
.h4 { width: 53px; }
.h5 { width: 66px; }
.h6 { width: 74px; }

.holdings th {
    height: 18px;
    background: #d8e4f3;
    border-right: 1px solid #bbb;
    border-bottom: 1px solid #aaa;
}

.holdings td {
    height: 17px;
    padding-right: 3px;
    border-right: 1px solid #bbb;
    background: #e6e6e6;
    text-align: right;
}

.holdings th input,
.holdings td input {
    display: block;
    margin: 0 4px;
}

.holdings .sel td {
    background: #cbe8f2;
}

.hbar {
    height: 16px;
}

.hbar .thumb { flex: 427; }
.hbar .track { flex: 62; }

/* Chart windows */
.chart {
    display: flex;
    flex-direction: column;
    min-width: 0;
    min-height: 0;
    height: 100vh;
    padding: 0 6px 5px 3px;
    border-left: 4px solid #8a8a8a;
    border-right: 3px solid #808080;
    background: #dedede;
}

.chart.minute {
    padding: 0 3px 9px 0;
    border-left-width: 0;
}

.title {
    display: flex;
    flex: none;
    gap: 4px;
    height: 15px;
    margin: 0 -5px 0 -2px;
    background: linear-gradient(#8a8a8a, #9c9c9c);
    color: #e8e8e8;
    overflow: hidden;
}

.minute .title {
    margin: 0 -3px 0 0;
}

.title .badge {
    width: 11px;
    height: 11px;
    line-height: 10px;
    font-size: 10px;
}

.title span {
    flex: 1;
    line-height: 9px;
}

.tools,
.win {
    display: flex;
    gap: 2px;
}

.tools { margin-right: 6px; }

.title button {
    width: 17px;
    height: 13px;
    border: 1px solid #777;
    border-top: 0;
    background: #e6e4e0;
    color: #111;
    font: bold 11px/10px "Liberation Serif", serif;
    overflow: hidden;
}

.title .win button {
    width: 13px;
    font-family: "DejaVu Sans", sans-serif;
}

.title svg {
    display: block;
    width: 13px;
    height: 12px;
    margin: auto;
}

.toolbar {
    display: flex;
    flex: none;
    align-items: center;
    gap: 2px;
    width: 850px;
    height: 27px;
    padding-left: 1px;
    margin-left: -1px;
    border: solid #777;
    border-width: 0 1px 1px 0;
    background: #cdcbcb;
}

.minute .toolbar {
    width: 100%;
    overflow: hidden;
}

.toolbar > * {
    flex: none;
    height: 20px;
}

.toolbar .btn {
    height: 20px;
    line-height: 17px;
}

.toolbar svg {
    display: block;
    width: 15px;
    height: 16px;
    margin: auto;
}

.ic { width: 18px; }
.ic2 { width: 28px; }

.ic2 svg {
    display: inline-block !important;
    vertical-align: middle;
}

.code { width: 84px; }

.name {
    width: 126px;
    border: 1px solid #888;
    padding-left: 2px;
}

.seg,
.icons {
    display: flex;
}

.seg .btn { width: 18px; }
.seg.big .btn { width: 20px; }
.icons .btn { width: 18px; }
.icons .btn:last-child svg { width: 14px; }

.cycle {
    width: 36px;
    margin-left: -2px;
    padding-left: 1px;
}

.count {
    width: 29px;
    margin-left: 2px;
    padding-left: 2px;
    border: 1px solid #888;
}

.total {
    width: 42px;
    padding-left: 4px;
    line-height: 21px;
    color: #444;
}

.quote-row {
    display: flex;
    flex: none;
    gap: 4px;
    height: 28px;
    padding: 4px 0 2px 0;
}

.minute .quote-row {
    height: 25px;
    padding: 2px 0 3px 0;
}

.quote {
    display: grid;
    grid-template-columns: 56px 20px 48px 63px 80px 69px 40px 61px 63px 16px 53px 18px 51px 19px 1fr;
    width: 714px;
    height: 21px;
    margin-right: 44px;
    border: 1px solid #111;
    background: #fdfdff;
    color: #1a4ea8;
    line-height: 19px;
    text-align: right;
}

.quote span:nth-child(4),
.quote span:nth-child(6),
.quote span:nth-child(9) {
    padding-right: 3px;
    border-right: 1px solid #111;
}

.quote .vol {
    padding-right: 3px;
    background: #ebf6e2;
    color: #222;
}

.quote .pct {
    display: flex;
    justify-content: space-between;
    padding-left: 3px;
    color: #222;
}

.quote em {
    font-style: normal;
    color: #1a4ea8;
}

.quote .k {
    color: #333;
    text-align: center;
}

.quote span:last-child { padding-right: 3px; }

.trade {
    width: 39px;
    height: 22px;
}

.trade.buy { background: #f6cdc7; }
.trade.sell { background: #c5dcf2; }

.panes {
    flex: 1;
    display: flex;
    flex-direction: column;
    min-height: 0;
    border-top: 1px solid #888;
}

.chart:not(.minute) .panes,
.chart:not(.minute) .times {
    border-left: 1px solid #999;
}

.pane {
    display: flex;
    flex-basis: 0;
    min-height: 0;
    border-bottom: 1px solid #888;
}

.pane-plot {
    position: relative;
    flex: 1;
    min-width: 0;
    background: #fff;
}

.plot {
    shape-rendering: crispEdges;
}

.plot * {
    vector-effect: non-scaling-stroke;
}

.pane-plot svg {
    position: absolute;
    width: 100%;
    height: 100%;
}

.note {
    position: absolute;
    line-height: 12px;
    white-space: nowrap;
    transform: translateY(-50%);
}

.note.high { color: #d01010; }
.note.low { color: #1010b8; }

.grid-box {
    position: absolute;
    width: 13px;
    height: 13px;
    border: 1px solid #222;
    background: #fff repeating-linear-gradient(#777 0 1px, transparent 1px 4px);
}

.axis {
    position: relative;
    flex: none;
    width: 66px;
    overflow: hidden;
    border-left: 1px solid #888;
    background: #d6e1ee;
    color: #444;
}

.axis::after {
    content: "";
    position: absolute;
    inset: 0 auto 0 0;
    width: 3px;
    background: repeating-linear-gradient(transparent 0 9px, #888 9px 10px);
}

.axis span {
    position: absolute;
    left: 8px;
    line-height: 12px;
    transform: translateY(-50%);
}

.axis span::before {
    content: "";
    position: absolute;
    left: -8px;
    top: 6px;
    width: 6px;
    border-top: 1px solid #777;
}

.axis .close {
    position: absolute;
    top: 4px;
    right: 2px;
    width: 9px;
    height: 8px;
    border: 0;
    background: #333;
    color: #fff;
    font: 7px/7px "DejaVu Sans", sans-serif;
}

.axis .mark {
    left: 0;
    z-index: 1;
    background: #d6e1ee;
    color: #c8201c;
}

.axis .mark.blue { color: #1a4ea8; }
.axis .mark::before { display: none; }
.axis .mark.change { left: 8px; }

.axis .mark.now {
    left: 4px;
    width: 58px;
    padding-left: 4px;
    background: #1458c8;
    color: #fff;
}

.minute .axis .mark.now { background: #e81808; }

.times {
    display: flex;
    flex: none;
    height: 18px;
    border-bottom: 1px solid #888;
    background: #d6e1ee;
    line-height: 17px;
    color: #333;
}

.times div {
    position: relative;
    flex: 1;
}

.times span {
    position: absolute;
    padding-left: 2px;
    border-left: 1px solid #aaa;
}

.times .day {
    padding-left: 1px;
    border: 0;
}

.minute .times .day { font-weight: normal; }

.times time {
    flex: none;
    width: 66px;
    padding-left: 8px;
    border-left: 1px solid #888;
}

.scroller {
    flex: none;
    height: 17px;
    margin-top: 1px;
}

.t1 { flex: 471; }
.k1 { flex: 302; }
.t2 { flex: 310; }
.k2 { flex: 60; }

.scroller input {
    appearance: none;
    width: 72px;
    margin: 0 2px;
    background: repeating-linear-gradient(90deg, #333 0 1px, transparent 1px 8px) 0 100% / 100% 3px no-repeat,
        linear-gradient(#555, #555) 0 5px / 100% 2px no-repeat #dcd9d2;
}

.scroller input::-webkit-slider-thumb {
    appearance: none;
    width: 4px;
    height: 10px;
    margin-top: -4px;
    border: 1px solid #777;
    background: #eee;
}

.draw {
    display: flex;
    width: 222px;
    background: #e9e9ea;
}

.draw button {
    flex: 1;
    border: 0;
    background: none;
}

.draw button:nth-child(4) { background: #fff; }

.draw svg {
    display: block;
    width: 15px;
    height: 15px;
}
```
FILE: script.js
```js
const SVG = 'http://www.w3.org/2000/svg';
const RED = '#dc1e14', BLUE = '#1414c8', ORANGE = '#eba020', TEAL = '#3c9068', BLACK = '#000', LIME = '#9ac41c';
const YELLOW = '#ffff96', CYAN = '#c8ffff', MAGENTA = '#f010e8', GRID = '#bdbdbd';

const pts = (s, dx = 0) => s.trim().split(/\s+/).map(p => {
    const [x, y] = p.split(',').map(Number);
    return [x + dx, y];
});
// second string continues the first half of the wide chart
const join = (a, b) => pts(a).concat(pts(b, 1542));

function el(svg, name, attrs) {
    const node = document.createElementNS(SVG, name);
    for (const k in attrs) node.setAttribute(k, attrs[k]);
    svg.appendChild(node);
    return node;
}

function line(svg, points, stroke, width = 2, dash = '') {
    el(svg, 'polyline', { points: points.join(' '), fill: 'none', stroke, 'stroke-width': width, 'stroke-dasharray': dash, 'stroke-linejoin': 'round' });
}

function area(svg, points, fill) {
    el(svg, 'polygon', { points: points.join(' '), fill });
}

function band(svg, top, bottom, fill) {
    area(svg, top.concat([...bottom].reverse()), fill);
}

// fill the part of a series that goes past a level
function excess(svg, points, level, side, fill) {
    const out = [[points[0][0], level]];
    points.forEach((p, i) => {
        const q = points[i - 1];
        if (q && (q[1] - level) * (p[1] - level) < 0) {
            out.push([q[0] + (p[0] - q[0]) * (level - q[1]) / (p[1] - q[1]), level]);
        }
        out.push([p[0], side < 0 ? Math.min(p[1], level) : Math.max(p[1], level)]);
    });
    out.push([points[points.length - 1][0], level]);
    area(svg, out, fill);
}

function at(points, x) {
    for (let i = 1; i < points.length; i++) {
        const [x0, y0] = points[i - 1], [x1, y1] = points[i];
        if (x <= x1) return y0 + (y1 - y0) * (x - x0) / (x1 - x0);
    }
    return points[points.length - 1][1];
}

function candles(svg, points, step, body, size, wick) {
    let prev = points[0][1];
    for (let x = points[0][0], i = 0; x <= points[points.length - 1][0]; x += step, i++) {
        const close = at(points, x) + Math.sin(i * 2.3) * size;
        const up = close < prev;
        const color = up ? '#dc2818' : '#1458c0';
        const top = Math.min(close, prev), h = Math.max(Math.abs(close - prev), size / 2);
        const w = wick * (1 + Math.sin(i * 5.1)) / 2;
        line(svg, [[x, top - w], [x, top + h + wick - w]], color, 1);
        el(svg, 'rect', { x: x - body / 2, y: top, width: body, height: h, fill: color });
        prev = close;
    }
}

function arrows(svg, points, dir, fill) {
    points.forEach(([x, y]) => {
        const d = dir > 0 ? 'm0 -17 10 15h-5v18h-10v-18h-5z' : 'm0 17 10 -15h-5v-18h-10v18h-5z';
        el(svg, 'path', { d: `M${x} ${y}${d}`, fill });
    });
}

function pane(parent, box) {
    const row = document.createElement('div');
    row.className = 'pane';
    row.style.flexGrow = box.grow;
    row.innerHTML = `<div class="pane-plot"><svg class="plot" viewBox="${box.view.join(' ')}" preserveAspectRatio="none"></svg></div><div class="axis"></div>`;
    document.getElementById(parent).appendChild(row);
    const svg = row.querySelector('svg'), axis = row.querySelector('.axis');
    const [vx, vy, vw, vh] = box.view;
    (box.ys || []).forEach(y => line(svg, [[vx, y], [vx + vw, y]], GRID, 1));
    (box.xs || []).forEach(x => line(svg, [[x, vy], [x, vy + vh]], GRID, 1));
    (box.dashed || []).forEach(x => line(svg, [[x, vy], [x, vy + vh]], GRID, 1, '5 4'));
    (box.labels || []).forEach(([text, y, mark]) => {
        axis.insertAdjacentHTML('beforeend', `<span class="${mark || ''}" style="top:${(y - vy) / vh * 100}%">${text}</span>`);
    });
    if (box.close !== false) axis.insertAdjacentHTML('beforeend', '<button class="close" aria-label="닫기">x</button>');
    svg.note = (cls, text, x, y) => svg.parentNode.insertAdjacentHTML('beforeend',
        `<span class="${cls}" style="left:${(x - vx) / vw * 100}%;top:${(y - vy) / vh * 100}%">${text}</span>`);
    return svg;
}

/* Order ladder */
const asks = [[8, 12], [9, 10], [7, 7], [9, 12], [6, 8]];
const bids = [[15, 6], [15, 10], [9, 7], [13, 4], [12, 11]];
const info = [['시가', '29913', 'red'], ['고가', '29955', 'red'], ['저가', '29641', ''], ['정산가', '29910', 'dark'], ['현재가', '29760', ''],
    ['대비', '150', ''], ['등락율', '-0.50%', ''], ['거래량', '155,284', 'dark'], ['전일거래', '182,881', 'dark']];
const ticks = [[29760, 1], [29760, 1], [29759, 0], [29759, 0], [29759, 0], [29759, 0], [29760, 1], [29760, 1], [29760, 1], [29759, 0]];

const mix = (a, b, t) => `rgb(${a.map((v, i) => Math.round(v + (b[i] - v) * t)).join(',')})`;
let rows = '';
for (let i = 0; i < 30; i++) {
    const upper = i < 15;
    const price = upper ? 29775 - i : 29774 - i;
    const bg = upper ? mix([203, 229, 233], [247, 242, 251], i / 14) : mix([255, 255, 255], [252, 208, 192], (i - 15) / 14);
    let left = `<td>${upper && i > 9 ? asks[i - 10][0] : ''}</td><td>${upper && i > 9 ? asks[i - 10][1] : ''}</td>`;
    if (i === 15) {
        left = '<td class="ticks" colspan="2" rowspan="9"><div class="tick-list"><ol>' +
            ticks.map(([p, up]) => `<li><span>${p}</span><span class="${up ? 'red' : ''}">1</span></li>`).join('') +
            '</ol><div class="vbar"><button aria-label="위로">▲</button><span class="thumb"></span><span></span><button aria-label="아래로">▼</button></div></div></td>';
    } else if (i > 15 && i < 24) {
        left = '';
    }
    let right = '<td></td><td></td>';
    if (upper && i > 5) {
        const [k, v, c] = info[i - 6];
        right = `<td class="key">${k}</td><td class="val ${c}">${v}</td>`;
    } else if (i > 14 && i < 20) {
        right = `<td>${bids[i - 15][0]}</td><td>${bids[i - 15][1]}</td>`;
    }
    rows += `<tr><td class="blue"></td><td class="${upper ? 'blue' : ''}"></td>${left}<td class="price" style="background:${bg}">${price}</td>${right}<td class="${upper ? '' : 'pink'}"></td><td class="pink"></td></tr>`;
}
document.getElementById('ladder').innerHTML = rows;

/* Daily mini chart */
const mini = document.getElementById('mini');
line(mini, [[48, 1231], [482, 1231]], '#888', 1);
line(mini, pts('76,1123 130,1116 185,1117 238,1085 292,1033 346,995 400,965 454,940'), '#3c78c0', 1);
line(mini, pts('76,1150 185,1121 238,1100 292,1078 346,1062 400,1041 454,1028'), '#501050', 1);
line(mini, pts('76,1221 185,1200 292,1162 400,1128 454,1109'), '#d8b030', 1);
// x, high, body top, body bottom, low, volume top, price up, volume up
[[76, 1118, 1126, 1160, 1167, 1304, 1, 0], [130, 1068, 1087, 1098, 1111, 1291, 0, 1], [184, 1085, 1095, 1107, 1129, 1322, 1, 0], [238, 943, 943, 1061, 1077, 1247, 1, 1],
    [292, 862, 898, 907, 928, 1252, 1, 0], [346, 870, 899, 954, 1003, 1236, 0, 1], [400, 920, 930, 937, 971, 1236, 1, 1], [454, 920, 930, 967, 996, 1265, 0, 0]].forEach(([x, hi, t, b, lo, v, up, vup]) => {
    const color = up ? '#e81c0c' : '#145ac8';
    line(mini, [[x, hi], [x, lo]], color, 1);
    el(mini, 'rect', { x: x - 25, y: t, width: 51, height: b - t, fill: color });
    el(mini, 'rect', { x: x - 25, y: v, width: 51, height: 1424 - v, fill: vup ? '#e81c0c' : '#145ac8' });
});
line(mini, pts('76,1305 185,1305 238,1292 300,1282 380,1264 454,1248'), '#e040a0', 1);
line(mini, pts('76,1325 185,1313 292,1303 400,1292 454,1289'), '#d8b030', 1);

/* Tick chart */
const TX = [333, 709, 1349, 1844, 2458];
const main = pane('tick-panes', {
    grow: 301, view: [38, 210, 2847, 903], xs: TX, close: false,
    ys: [232, 292, 355, 418, 481, 544, 607, 670, 731, 793, 856, 918, 982, 1045],
    labels: [['29770', 296], ['29750', 418], ['29740', 478], ['29730', 541], ['29720', 604], ['29710', 667], ['29700', 728], ['29690', 790], ['29680', 853], ['29670', 915], ['29660', 979], ['29650', 1042],
        ['LC:0.36', 230, 'mark'], ['HC:-0.03', 266, 'mark blue'], ['29760', 352, 'mark now'], ['-0.01%', 388, 'mark blue change']]
});
area(main, pts('38,560 38,500 100,440 140,430 180,395 210,395 270,420 310,430 340,480 370,560'), YELLOW);
area(main, pts('215,388 685,388 690,460 650,480 545,545 505,590 450,575 380,510 340,470 320,430 230,400'), CYAN);
area(main, pts('505,583 600,515 650,480 700,460 740,510 785,581'), YELLOW);
area(main, pts('700,458 933,458 933,722 880,720 830,670 785,581 740,510'), CYAN);
area(main, pts('1110,740 1190,715 1220,665 1245,625 1300,640 1320,742'), YELLOW);
area(main, pts('1320,645 1664,645 1672,770 1862,770 1870,868 1812,872 1742,820 1700,772 1568,820 1530,815 1490,780 1440,760 1370,655'), CYAN);
area(main, pts('1582,818 1622,780 1662,772 1702,780 1742,820'), YELLOW);
area(main, pts('1927,852 2140,855 2165,870 2100,910 2060,935 2020,920 1960,870'), CYAN);
area(main, pts('2132,925 2202,860 2242,800 2292,730 2342,655 2392,600 2442,570 2482,525 2522,490 2564,435 2564,925'), YELLOW);

// trend lines
['38,540 543,848', '38,682 500,1110', '38,765 243,980', '38,842 407,907', '240,290 305,210', '362,683 730,470 1013,210', '365,682 700,500 1065,277', '520,590 1103,1110', '500,560 1338,1110', '200,340 500,580',
    '190,325 1460,505', '1060,780 1398,1110', '680,395 1568,645', '1060,910 1513,210', '1220,640 1568,760', '2022,1010 2312,700 2882,307', '1757,992 2182,865 2882,635', '2182,840 2882,1005', '2232,830 2882,420',
    '1690,905 2037,1110', '1902,815 2527,1110', '2482,400 2618,210', '1542,860 1779,1110', '1900,765 2200,845'].forEach(s => line(main, pts(s), '#b83a30', 1));
['38,628 730,210', '38,560 1568,297 2062,210', '38,605 187,626', '38,678 547,1110', '190,320 1962,506', '640,365 2882,545', '1060,905 1542,590 2127,210', '1542,850 1755,1110', '1542,885 2642,637',
    '1225,460 1568,870'].forEach(s => line(main, pts(s), '#2a5ca0', 1));
line(main, join('38,470 150,468 270,458 350,460 450,485 520,497 600,487 690,485 740,500 820,540 900,560 980,578 1050,607 1150,620 1250,618 1340,620 1400,640 1480,665', '0,687 100,690 200,730 300,748 400,768 460,790 560,805 680,803 750,785 850,750 900,735 960,695 1022,660'), '#7a7a7a', 3);
line(main, join('38,452 100,460 150,440 190,432 240,450 320,455 360,490 440,555 510,590 560,560 620,535 690,508 720,520 800,575 900,620 950,645 1000,675 1050,730 1110,755 1190,775 1250,740 1340,742 1400,770 1460,775 1520,800', '0,815 100,818 180,830 240,850 330,838 400,850 450,890 520,920 600,925 660,925 710,900 760,860 820,790 880,725 950,640 1022,542'), '#989898', 2);
line(main, join('38,540 60,500 100,440 160,400 190,370 240,368 320,380 340,420 380,500 420,560 450,600 505,620 540,570 610,530 660,480 700,470 740,510 780,570 820,650 880,720 950,780 1000,820 1050,848 1090,830 1120,790 1190,730 1220,670 1240,630 1300,645 1370,645 1420,700 1470,760 1520,810', '0,835 80,825 160,830 200,870 240,885 290,855 340,855 400,870 430,900 470,940 520,950 560,940 600,900 660,850 720,750 780,640 830,560 900,500 960,390 1020,340'), TEAL, 2);
line(main, pts('38,560 325,560'), BLACK);
line(main, pts('495,585 520,581 785,581 830,670 880,720 940,728 1000,716 1040,730 1065,750 1110,742 1315,740'), BLACK);
line(main, join('1370,655 1440,760 1490,780 1530,815', '0,820 200,822 270,872 390,872'), BLACK);
line(main, pts('2190,925 2564,925'), BLACK);
line(main, pts('38,490 100,440 140,430 180,395 210,395 230,405 270,420 310,430 325,470'), '#0a780a', 3);
line(main, pts('505,600 545,545 600,510 650,480 680,460'), '#0a780a', 3);
line(main, pts('1090,742 1190,715 1220,665 1245,625 1290,635'), '#0a780a', 3);
line(main, pts('1582,810 1622,780 1662,772 1702,780 1742,820 1782,860'), '#0a780a', 3);
line(main, pts('1922,850 1962,870 2022,925 2062,935 2142,905 2202,860 2242,800 2292,730 2342,655 2392,600 2442,570 2482,525 2522,490 2564,435'), '#0a780a', 3);
['215,388 640,388 685,395 690,440 700,458 933,458 933,715', '1040,713 1105,713 1110,740', '1340,645 1664,645 1672,770 1862,770', '1927,850 2140,852'].forEach(s => line(main, pts(s), '#e01020', 2));
['38,712 1180,625 2564,518 2882,493', '38,303 640,360 1568,447 2402,530 2882,580', '190,320 1130,550 1542,597 1660,580', '150,310 690,450 1493,1110', '550,350 690,450 1210,565 1568,650',
    '1225,458 1542,635 2392,1110', '1542,635 2882,935', '1542,635 2827,1108'].forEach(s => line(main, pts(s), LIME, 2));

candles(main, join('43,310 52,360 60,410 70,460 80,430 92,420 105,465 117,450 125,400 137,350 150,390 155,420 163,390 175,350 187,330 195,360 205,400 218,450 230,490 242,465 255,450 268,500 280,490 290,470 305,465 318,450 325,520 335,600 345,630 355,600 362,630 372,580 382,550 395,570 405,530 412,500 422,560 432,620 445,600 465,610 475,590 485,560 495,590 508,580 515,500 525,460 535,420 545,390 555,370 565,440 575,470 590,430 600,440 612,490 625,490 635,440 643,400 655,440 665,480 675,510 687,540 700,530 712,580 722,680 735,640 745,630 755,680 768,720 778,760 790,750 800,790 815,790 825,810 835,760 845,710 855,740 865,740 875,700 890,660 900,640 910,680 920,740 930,690 945,670 955,680 965,700 978,720 990,760 1002,800 1015,770 1025,800 1035,850 1048,890 1055,820 1065,730 1075,690 1085,690 1097,640 1110,640 1120,690 1135,665 1148,690 1160,680 1175,700 1185,690 1193,640 1203,580 1213,520 1225,480 1235,510 1247,570 1260,640 1272,690 1285,730 1297,770 1310,760 1322,690 1335,665 1347,680 1360,690 1375,720 1390,790 1405,820 1418,870 1430,870 1443,820 1452,770 1465,800 1480,830 1495,840 1507,850 1520,810 1535,850 1545,870',
    '8,850 20,750 32,690 45,720 58,740 70,700 85,690 98,740 110,760 120,820 135,850 150,880 165,890 178,890 190,950 205,970 218,930 232,890 245,850 258,830 272,800 285,820 300,790 312,790 322,840 335,870 350,890 360,840 375,860 390,880 402,860 412,900 425,930 437,960 450,990 462,940 475,910 490,940 500,970 510,910 525,920 538,920 548,930 555,870 565,850 580,820 595,820 610,850 622,860 632,810 645,760 658,720 670,680 685,650 700,640 715,640 728,670 740,690 750,650 760,590 770,560 780,545 790,530 800,560 812,610 820,640 832,590 842,550 855,555 867,500 878,510 890,500 903,465 915,480 925,450 935,410 945,380 958,390 970,385 985,390 995,360 1008,360 1020,340'), 9.15, 8, 16, 40);
line(main, join('38,375 60,350 80,338 100,345 115,375 135,385 155,380 175,355 190,362 205,385 225,415 250,435 270,455 300,458 320,475 335,520 350,580 370,605 400,608 430,605 450,615 480,620 505,615 515,590 530,540 545,490 560,460 590,435 620,435 645,420 660,405 680,430 700,470 712,490 730,560 745,620 768,680 790,750 810,790 830,810 858,835 880,820 900,770 930,750 955,710 985,690 1010,710 1035,770 1060,810 1090,780 1120,735 1150,705 1180,700 1195,670 1210,600 1230,560 1250,530 1270,545 1285,600 1310,655 1340,680 1385,725 1400,780 1415,840 1440,872 1465,855 1490,845 1515,850',
    '0,865 20,830 40,780 60,745 90,715 120,730 150,770 180,840 205,910 225,945 250,955 270,920 300,895 320,860 345,850 380,840 410,855 435,880 450,920 470,955 500,975 530,960 560,935 590,880 620,850 640,800 660,740 690,680 705,650 730,625 745,620 765,570 785,540 820,534 865,532 880,520 915,480 940,430 960,395 985,380 1020,328'), MAGENTA, 2);
line(main, join('505,485 700,485 810,492 950,508 1100,522 1300,533', '0,562 100,570 250,590 400,606 550,627 650,637 800,637 900,632 1022,619'), MAGENTA, 3);
arrows(main, join('152,312 197,312 60,345 428,535 573,388 598,388 655,375 672,400 967,658 1140,602 1250,525 1362,632 1497,765 1535,750', '95,675 320,780 617,795 727,577 800,495'), -1, '#6a64a4');
arrows(main, join('325,388 767,645 803,732 822,726 1031,755 1371,668', '186,877 369,796 405,820 497,893'), -1, BLACK);
arrows(main, join('124,488 307,523 379,622 453,667 636,542 665,535 829,869 1059,910 1187,772 1333,754 1442,899 1509,899 1553,886', '10,886 212,1037 395,962 472,985 508,1012 624,899 864,610'), 1, '#ff6a08');
arrows(main, join('161,473 544,479 929,738', '636,874 752,673 909,523 929,530 1010,425'), 1, '#ff0808');
area(main, pts('55,314 72,306 72,326'), '#f00');
line(main, pts('1952,1012 1985,1012'), '#0000e0', 1);
area(main, pts('1975,997 1991,1012 1975,1027'), '#0000e0');
main.note('grid-box', '', 48, 267);
main.note('note high', '최고 29769 (12:25)', 97, 310);
main.note('note low', '최저 29654 (15:40)', 1680, 1010);

const osc = pane('tick-panes', { grow: 112, view: [38, 34, 2847, 336], xs: TX, ys: [76, 139, 259, 319], labels: [['20', 74], ['10', 137], ['0', 198], ['-10', 257], ['-20', 317]] });
line(osc, [[38, 198], [2885, 198]], LIME);
line(osc, join('43,95 60,120 72,148 85,150 110,180 140,140 150,155 165,138 187,138 200,170 230,210 270,235 290,228 318,228 335,280 360,300 375,278 410,250 430,262 460,258 480,235 505,240 520,180 545,122 558,125 570,145 590,145 605,175 620,190 645,158 680,190 705,230 720,285 745,300 775,340 795,352 820,356 840,310 860,280 885,240 900,228 915,240 930,226 960,232 980,245 1000,265 1020,268 1043,318 1060,280 1075,220 1100,163 1140,168 1180,190 1195,140 1215,90 1230,80 1245,105 1260,150 1280,215 1300,253 1320,240 1340,215 1380,225 1400,280 1425,315 1440,290 1455,258 1490,262 1540,250',
    '0,250 15,235 30,172 80,170 110,200 150,270 175,280 200,316 215,300 240,250 270,200 310,185 340,222 400,228 430,262 455,272 470,245 500,248 540,220 560,175 590,155 620,170 650,120 680,72 705,56 735,95 760,62 790,50 805,70 820,108 860,95 880,78 910,68 920,75 940,45 965,48 980,62 1022,62'), RED, 2);
line(osc, join('43,160 60,148 90,150 115,160 195,150 240,180 290,208 320,215 380,262 430,260 505,248 530,215 560,178 600,165 670,172 712,200 760,260 820,318 860,316 910,270 950,250 990,245 1030,265 1060,280 1090,240 1130,205 1190,185 1230,140 1255,130 1280,145 1310,185 1350,208 1380,215 1420,260 1450,270', '0,258 30,230 70,197 105,190 150,215 200,265 230,272 260,260 300,218 330,212 400,225 450,248 500,245 550,230 590,195 640,175 680,125 715,97 760,90 800,72 830,88 870,90 920,78 980,60 1022,60'), BLUE);
line(osc, join('43,195 70,180 130,172 205,160 260,185 320,210 370,240 440,247 500,245 560,205 620,190 680,182 720,200 790,260 830,282 880,285 940,258 1000,250 1065,270 1110,235 1190,215 1230,175 1265,163 1300,180 1340,200 1390,210 1440,240', '0,250 60,220 110,208 160,230 220,255 260,250 320,222 400,228 450,245 550,235 590,210 640,195 710,140 760,120 810,102 900,92 980,75 1022,72'), ORANGE);
line(osc, join('43,210 100,195 200,183 260,192 380,222 500,232 580,205 700,200 760,215 840,250 890,258 1000,248 1070,258 1120,235 1200,220 1270,195 1340,205 1400,215 1460,230', '0,237 100,220 200,237 260,240 330,230 400,228 480,237 560,230 650,215 720,175 820,140 900,128 1022,98'), TEAL);
line(osc, join('43,198 200,187 300,192 420,207 520,213 640,200 710,200 800,218 890,231 960,230 1060,237 1160,230 1270,212 1370,212 1450,224', '0,230 120,218 220,232 350,227 450,233 550,232 650,218 800,185 900,170 1022,147'), BLACK);

const cci = pane('tick-panes', { grow: 96, view: [38, 370, 2847, 288], xs: TX, ys: [394, 643], labels: [['200', 392], ['0', 515]] });
[453, 516, 579].forEach(y => line(cci, [[38, y], [2885, y]], LIME));
const cciRed = join('43,430 55,480 68,565 80,545 90,550 110,560 120,520 128,450 135,405 145,460 155,525 165,475 180,460 190,480 200,580 222,605 235,570 250,550 272,590 285,540 300,500 318,445 325,580 335,645 345,595 365,580 385,530 395,530 408,425 425,560 440,550 450,530 462,555 480,468 490,510 500,510 508,440 518,377 535,435 555,470 575,520 590,520 600,580 610,597 625,540 635,440 648,440 655,515 668,520 683,617 695,570 708,575 722,615 738,565 755,575 775,605 790,575 820,575 830,530 840,440 850,475 860,500 870,460 895,425 905,460 912,550 930,470 940,530 950,510 965,580 985,580 995,628 1008,580 1020,585 1037,620 1050,560 1065,430 1100,455 1115,490 1130,490 1150,578 1158,540 1170,575 1178,575 1185,400 1195,392 1215,425 1235,470 1260,570 1275,605 1300,580 1320,520 1340,470 1350,490 1370,540 1390,640 1405,600 1430,565 1455,465 1480,520 1500,540 1525,510 1540,600',
    '3,600 10,450 20,385 30,400 40,470 55,495 80,480 90,500 95,575 103,545 115,625 135,590 180,570 190,612 205,560 225,520 240,425 265,445 280,480 300,462 315,465 322,580 335,615 352,590 360,530 380,560 395,510 410,580 432,615 445,580 455,590 468,500 480,465 490,490 498,565 506,460 515,495 530,475 545,535 555,415 575,418 590,440 600,500 612,527 625,500 642,410 660,430 690,455 720,460 728,500 737,570 750,430 762,402 775,440 800,470 820,585 830,560 840,490 855,500 865,430 880,440 890,470 905,450 920,465 935,405 950,450 965,470 982,490 995,460 1010,428 1022,445');
excess(cci, cciRed, 453, -1, '#f00');
excess(cci, cciRed, 582, 1, '#00f');
line(cci, cciRed, RED, 2);
line(cci, join('43,450 60,475 90,505 125,515 150,490 185,482 200,515 230,545 275,558 318,530 340,560 370,568 400,545 440,525 500,515 520,478 545,462 580,475 610,515 630,530 655,515 680,540 720,565 780,577 830,575 850,530 880,505 900,488 940,492 970,520 1000,555 1045,577 1080,525 1120,497 1150,505 1178,530 1200,485 1230,465 1260,500 1300,545 1345,515 1365,520 1400,560 1425,570 1470,530', '0,543 20,500 40,485 85,487 110,520 150,562 200,577 225,550 270,500 315,483 345,535 400,540 455,573 500,535 540,515 590,468 620,482 680,450 710,455 740,480 760,462 800,460 840,500 870,480 950,450 980,460 1022,450'), BLUE);
line(cci, join('43,480 100,508 190,488 220,520 280,535 320,530 370,550 420,530 500,520 550,488 600,500 640,520 700,540 780,555 830,560 880,520 940,512 1000,540 1050,555 1090,525 1180,525 1240,490 1290,525 1345,517 1430,550 1480,530', '0,540 40,512 90,503 150,540 210,560 270,520 320,505 350,530 400,530 455,553 500,540 590,495 630,498 700,467 740,478 800,467 850,492 950,458 1022,463'), ORANGE);
line(cci, join('43,505 120,512 200,508 280,525 370,538 500,522 580,510 680,518 820,545 900,522 1050,542 1200,520 1240,508 1300,522 1430,537', '0,535 90,512 210,543 310,513 380,530 455,543 560,520 680,490 740,492 800,482 850,490 1022,470'), TEAL);
line(cci, join('43,515 120,519 180,514 240,520 380,527 500,522 600,514 700,519 820,531 920,522 1050,533 1240,515 1400,524 1500,528', '0,528 70,517 220,532 310,522 450,536 560,522 700,507 850,503 950,495 1022,488'), BLACK);

const cloud = pane('tick-panes', { grow: 121, view: [38, 658, 2847, 363], xs: TX, ys: [724, 802, 880, 958], labels: [['29750', 721], ['29725', 799], ['29700', 877], ['29675', 955]] });
const upper = join('43,712 140,708 190,689 250,689 265,699 665,699 672,722 975,727 985,855 1090,852 1180,843 1210,815 1245,797', '0,795 122,795 130,873 370,873 378,920 440,926 535,927 545,960 600,940 650,915 710,855 750,845 795,803 855,800 900,775 950,740 1022,700');
const lower = join('43,830 475,830 485,822 750,822 825,895 850,902 1020,900 1055,920 1325,920 1332,880 1380,880 1430,925 1490,938', '0,942 180,942 222,978 360,978 450,976 480,988 560,992 1022,992');
const middle = join('43,762 80,740 130,728 180,712 240,720 290,728 330,740 380,775 440,795 505,805 560,780 620,768 660,748 700,745 740,765 800,815 860,865 890,878 1000,873 1060,887 1180,880 1220,845 1250,830 1360,837 1400,865 1440,892 1490,900', '0,922 50,915 100,903 180,905 230,935 290,950 340,950 400,940 450,955 500,972 560,975 620,962 700,910 760,870 810,835 860,815 900,800 950,770 985,758 1022,735');
band(cloud, upper, middle, CYAN);
band(cloud, middle, lower, YELLOW);
line(cloud, upper, BLACK);
line(cloud, lower, BLACK);
line(cloud, middle, LIME);
line(cloud, join('43,712 110,728 190,708 240,735 320,750 360,792 430,800 500,803 545,755 600,748 665,742 720,775 780,850 825,885 900,867 960,865 1000,880 1050,918 1100,865 1180,858 1210,815 1245,800 1300,858 1380,868 1435,922', '0,930 40,900 100,885 150,910 200,962 225,968 270,940 310,930 350,945 395,943 450,982 520,980 560,965 630,935 700,865 740,855 795,815 850,815 900,780 950,745 985,725 1022,708'), BLUE);
line(cloud, join('43,670 50,710 68,750 80,710 105,745 135,690 150,725 165,690 190,695 200,730 225,735 265,765 285,750 318,750 335,830 345,800 355,828 375,795 385,810 408,778 430,822 450,815 480,790 490,820 525,720 533,735 545,697 560,750 585,730 615,768 625,765 635,713 655,745 675,790 700,780 720,855 740,828 765,885 772,905 785,880 800,910 815,905 822,922 835,870 850,890 895,828 910,880 930,850 955,870 975,865 995,918 1020,895 1040,967 1055,920 1065,860 1098,828 1110,855 1125,840 1140,862 1160,850 1180,865 1190,820 1215,757 1240,795 1260,850 1290,902 1310,870 1335,850 1370,875 1400,940 1420,955 1450,900 1480,935 1510,930 1535,942',
    '5,940 30,850 50,890 80,870 110,920 150,965 170,960 190,1000 205,1000 215,960 235,965 265,915 290,935 305,915 340,960 375,945 395,955 410,950 415,980 435,985 450,1005 465,965 480,970 498,1000 510,955 525,980 545,980 565,925 580,920 610,942 630,910 670,845 690,840 705,825 725,858 738,850 760,790 775,800 785,780 820,838 835,795 855,800 865,765 885,760 893,775 900,740 918,753 935,710 950,715 965,705 980,715 1010,685 1022,695'), RED, 2);

const T5 = [169, 361, 687, 938, 1249];
const low1 = pane('tick-panes', { grow: 76, view: [20, 31, 1447, 228], xs: T5, ys: [57, 166], labels: [['-20.00', 54], ['-30.00', 163]] });
line(low1, pts('22,48 35,80 45,70 55,78 70,48 80,65 90,48 100,75 112,100 122,80 138,112 150,100 163,95 172,110 190,90 200,112 215,100 232,80 240,90 255,65 268,38 275,50 280,38 290,65 310,90 325,70 345,100 360,85 375,80 393,120 405,112 418,120 430,100 455,58 465,80 475,58 490,68 505,88 515,70 530,100 548,58 558,50 570,65 585,80 600,100 617,58 635,100 655,145 665,140 680,122 695,130 705,140 720,175 740,135 750,155 762,165 775,135 785,140 800,100 810,120 823,92 835,110 850,120 860,145 885,178 905,165 920,145 930,165 938,145 955,185 967,175 980,205 1005,240 1022,218 1038,250 1060,235 1078,207 1095,230 1115,185 1130,155 1150,172 1172,145 1185,150 1200,185 1210,168 1245,170 1250,188 1265,158 1282,165 1302,150'), '#cd7830', 1);
const low2 = pane('tick-panes', { grow: 86, view: [20, 259, 1447, 258], xs: T5, ys: [292, 466], labels: [['2.50', 289], ['0.00', 377], ['-2.50', 463]] });
line(low2, [[20, 379], [1467, 379]], '#777', 1);
line(low2, pts('22,305 35,330 50,370 62,403 78,390 90,335 100,345 112,385 125,435 143,445 160,395 172,425 183,452 200,437 210,405 230,370 240,375 250,388 260,370 270,320 278,277 295,300 310,345 320,402 345,388 360,415 375,475 385,508 410,490 428,430 445,370 457,325 473,328 490,370 510,425 518,425 532,470 545,430 555,350 567,290 580,280 590,320 600,380 610,355 627,283 640,300 650,370 660,470 669,503 678,480 690,410 702,380 712,405 722,455 732,470 750,410 775,355 790,385 805,330 823,315 838,345 855,445 870,460 887,487 900,440 915,370 925,320 938,297 948,330 965,400 980,420 988,412 1018,425 1040,395 1055,358 1090,315 1103,332 1130,300 1145,265 1155,290 1165,322 1190,325 1203,350 1210,345 1225,363 1240,335 1262,290 1275,300 1285,318 1302,325'), '#cd7830', 1);

/* 60 minute chart */
const MX = [102, 274, 472, 667, 864, 1061], MD = [77, 1086];
const hour = pane('minute-panes', {
    grow: 451, view: [16, 200, 1405, 1335], xs: MX, dashed: MD, close: false,
    ys: [326, 457, 584, 711, 838, 965, 1096, 1223, 1350, 1477],
    labels: [['31250', 323], ['31000', 454], ['30750', 581], ['30500', 708], ['30250', 835], ['30000', 962], ['29500', 1220], ['29250', 1347], ['29000', 1474],
        ['LC:2.41', 222, 'mark'], ['HC:-5.04', 258, 'mark blue'], ['29760', 1087, 'mark now'], ['0.07%', 1123, 'mark change']]
});
area(hour, pts('22,1388 70,1388 127,1398 120,1505 22,1505'), YELLOW);
area(hour, pts('150,1396 270,1370 330,1290 400,1160 450,1070 500,1000 550,950 590,932 658,930 648,1395'), YELLOW);
area(hour, pts('745,940 1030,940 1037,1008 960,1022 930,1030 850,1000 750,965'), CYAN);
area(hour, pts('940,1030 1020,1010 1110,1030'), YELLOW);
line(hour, pts('22,1505 120,1505 127,1396 648,1396 658,930 690,932 750,965 790,975 850,1000 930,1032 1115,1032'), BLACK, 2);
['16,503 228,384', '16,549 586,398', '16,860 1411,202', '16,1145 265,1060', '16,1335 1418,1143', '16,1340 1000,1195', '770,1168 945,1078 1418,850', '710,882 1418,1292'].forEach(s => line(hour, pts(s), '#b83a30', 1));
['402,285 1040,1531', '160,1400 705,860 1356,202', '16,1148 930,935', '16,1215 1418,742', '710,882 1418,1020', '16,1340 1040,1531', '16,1375 1418,1173', '16,1390 1209,1241', '16,1445 1418,1332', '16,1420 700,1190 1418,890'].forEach(s => line(hour, pts(s), '#2a5ca0', 1));
['16,529 1227,200', '16,1462 160,1420 770,1168 1418,890', '16,1466 1418,1098', '16,1470 1418,1150', '590,1531 1418,1437'].forEach(s => line(hour, pts(s), LIME, 2));
line(hour, pts('22,1388 70,1388 127,1396 160,1418 270,1370 330,1290 400,1160 450,1070 500,1000 550,950 590,932 658,930'), LIME, 2);
line(hour, pts('940,1030 1020,1010 1110,1028'), LIME, 2);
line(hour, pts('745,940 1028,940 1037,1008 1110,1008'), '#e01020', 2);
line(hour, pts('402,285 402,1050'), '#dc2818', 1);
line(hour, pts('770,1000 770,1168'), '#1458c0', 1);
candles(hour, pts('22,1410 46,1402 70,1402 95,1400 106,1412 120,1425 132,1425 145,1422 157,1405 170,1390 182,1380 206,1372 230,1365 255,1365 268,1350 280,1335 292,1310 303,1265 315,1220 327,1185 340,1175 352,1165 365,1150 377,1105 390,1055 402,985 415,955 427,945 439,920 464,915 489,920 500,935 513,915 525,900 537,910 550,945 562,965 574,955 587,945 612,940 637,935 650,930 675,940 688,945 700,920 710,905 722,935 745,945 757,1000 770,1055 782,1065 794,1030 807,1020 832,1020 857,1035 882,1035 894,1045 918,1048 943,1035 967,1022 992,1010 1005,1000 1017,975 1030,955 1055,965 1078,952 1090,1045 1103,1090 1115,1100 1140,1110 1163,1095'), 12.27, 6, 5, 28);
line(hour, pts('22,1350 60,1368 100,1388 140,1408 180,1412 230,1395 275,1368 310,1310 360,1215 390,1130 420,1020 460,930 500,850 515,828 530,820 545,817 560,820 600,845 630,870 660,893 690,930 745,935 790,995 860,1030 900,1055 930,1070 960,1068 1010,1045 1040,1000 1075,965 1110,1000 1140,1035 1163,1055'), TEAL, 3);
line(hour, pts('368,294 390,294'), '#f00', 2);
area(hour, pts('386,278 399,294 386,310'), '#f00');
line(hour, pts('135,1440 155,1440'), '#0000e0', 1);
area(hour, pts('138,1424 124,1440 138,1456'), '#0000e0');
hour.note('grid-box', '', 24, 260);
hour.note('note high', '최고 31341 (18:00)', 152, 291);
hour.note('note low', '최저 29061 (11:00)', 154, 1440);

const hosc = pane('minute-panes', { grow: 169, view: [16, 28, 1405, 507], dashed: MX.concat(MD), ys: [41, 118, 197, 274, 352, 430, 508], labels: [['400', 116], ['300', 194], ['200', 272], ['100', 349], ['0', 428], ['-100', 505]] });
line(hosc, pts('22,397 60,407 100,412 125,425 145,430 170,410 220,387 255,385 280,372 300,340 330,255 350,220 367,210 390,145 415,72 438,42 462,44 490,75 500,98 515,100 540,140 560,195 580,222 600,230 625,255 640,257 665,275 690,300 708,290 745,322 770,425 782,447 830,445 845,442 885,447 920,460 935,458 970,435 1000,422 1030,378 1055,368 1080,367 1095,430 1115,490 1140,518 1163,516'), RED);
line(hosc, pts('22,368 70,388 120,402 170,412 220,403 285,390 310,365 340,320 370,280 420,195 450,140 475,115 495,107 515,106 550,120 600,170 640,205 690,250 745,275 770,310 800,360 840,395 880,417 930,438 1000,437 1040,415 1078,395 1100,408 1163,465'), BLUE);
line(hosc, pts('22,387 100,395 170,403 240,400 300,388 350,350 390,310 430,255 475,210 510,185 545,173 590,178 650,200 710,232 745,245 790,295 840,332 890,360 950,392 1010,402 1080,393 1163,432'), ORANGE);
line(hosc, pts('22,402 130,407 250,402 320,390 380,360 430,315 480,283 540,252 600,243 660,246 745,258 790,280 850,308 910,332 970,355 1040,362 1090,366 1163,393'), TEAL);
line(hosc, pts('22,402 250,402 330,396 390,380 440,362 500,335 560,320 650,310 740,309 820,322 900,333 970,343 1080,350 1163,367'), BLACK);

const hcci = pane('minute-panes', { grow: 169, view: [16, 535, 1405, 507], xs: MX, dashed: MD, ys: [586, 680, 774, 868, 964], labels: [['200', 583], ['100', 677], ['0', 772], ['-100', 865], ['-200', 961]] });
const hRed = pts('22,930 30,880 45,840 57,840 80,790 92,808 98,760 105,610 112,800 120,958 130,935 143,870 155,730 167,650 180,643 205,680 228,690 242,715 255,700 265,620 277,582 300,590 330,625 345,670 365,705 390,640 402,545 413,700 425,715 445,720 475,750 488,765 500,802 512,705 525,703 535,820 550,985 562,985 573,835 600,815 622,790 632,680 645,632 665,745 683,870 697,770 708,573 718,750 745,860 757,1025 770,990 785,860 800,815 835,792 855,757 880,755 893,850 905,997 917,880 930,840 942,800 953,655 967,680 980,670 992,685 1005,665 1017,604 1030,625 1050,690 1065,710 1078,705 1090,952 1103,940 1115,880 1127,850 1150,835 1163,812');
excess(hcci, hRed, 678, -1, '#f00');
excess(hcci, hRed, 870, 1, '#00f');
line(hcci, hRed, RED);
line(hcci, pts('22,808 40,823 70,823 95,815 105,785 120,815 143,837 165,795 200,745 240,725 265,705 290,670 330,650 385,660 405,643 430,665 475,695 500,718 525,720 545,765 562,810 600,813 625,808 650,757 670,757 685,775 700,772 715,745 740,755 770,840 785,843 840,820 880,795 905,838 935,838 960,790 1000,750 1025,708 1055,697 1078,703 1095,750 1140,805 1163,807'), BLUE);
line(hcci, pts('22,773 60,785 105,778 145,805 200,763 250,745 310,698 385,685 410,673 450,685 500,705 525,705 560,745 600,768 630,770 660,750 690,762 715,745 745,760 785,803 840,800 885,793 930,820 970,795 1010,760 1078,735 1100,765 1163,788'), ORANGE);
line(hcci, pts('22,765 100,775 150,783 200,765 270,750 330,722 410,708 470,712 530,718 570,742 620,752 650,743 740,748 800,777 885,775 935,793 1010,768 1075,752 1115,775 1163,776'), TEAL);
line(hcci, pts('22,768 150,777 200,768 310,747 410,738 530,738 570,748 620,752 730,747 800,765 870,765 930,772 1060,755 1163,768'), BLACK);

/* Time axes and drawing tools */
function times(id, x0, w, marks, day, clock) {
    document.getElementById(id).innerHTML = `<div><b class="day">${day}</b>` +
        marks.map(([t, x]) => `<span style="left:${(x - x0) / w * 100}%">${t}</span>`).join('') + `</div><time>${clock}</time>`;
}
times('tick-times', 20, 1447, [['14:00', 169], ['14:30', 361], ['15:00', 687], ['15:30', 938], ['16:00', 1249]], '11/27', '16:04:25');
times('minute-times', 16, 1405, [['20', 102], ['21', 274], ['22', 472], ['23', 667], ['24', 864], ['25', 1061]], '11/17', '16:00:00');

document.querySelectorAll('.draw').forEach(box => {
    for (let i = 1; i <= 13; i++) {
        box.insertAdjacentHTML('beforeend', `<button aria-label="도구 ${i}"><svg><use href="#t-${i}"/></svg></button>`);
    }
});
```
